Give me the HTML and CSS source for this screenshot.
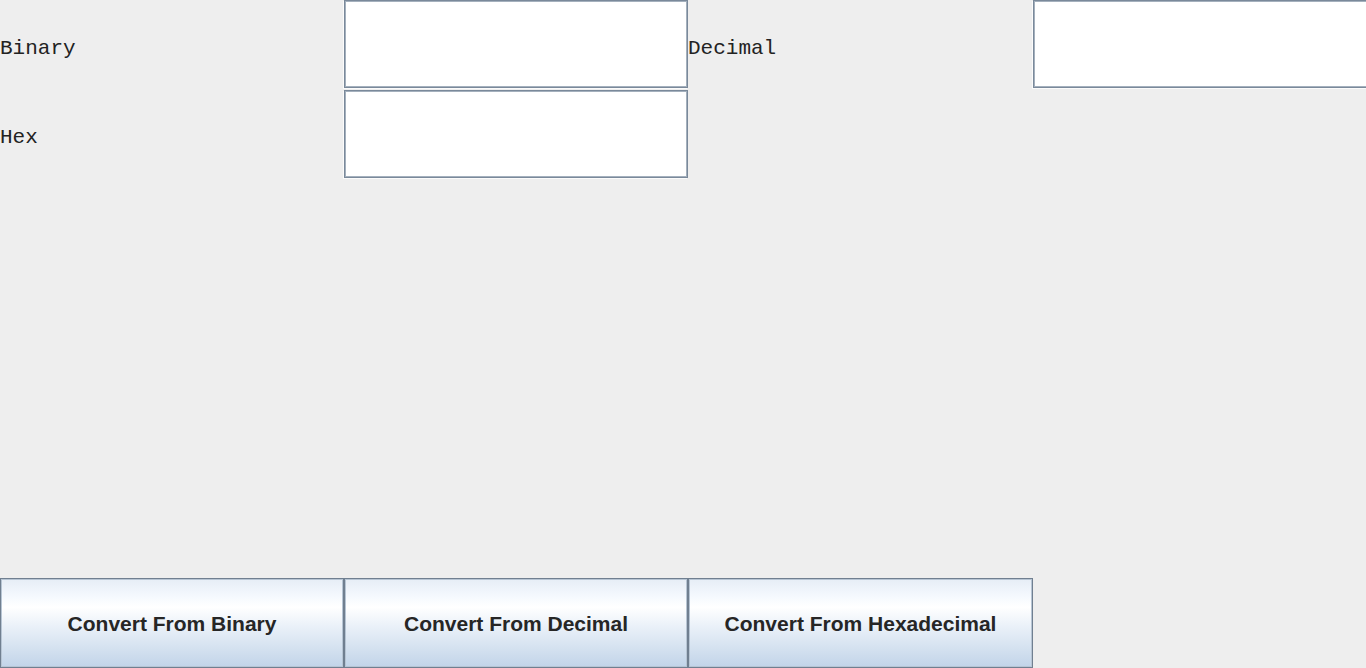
FILE: index.html
```html
<!DOCTYPE html>
<html>
<head>
<meta charset="utf-8">
<link rel="stylesheet" href="styles.css">
</head>
<body>
<div class="frame">
  <div class="fields">
    <label class="lbl">Binary</label>
    <div class="field"></div>
    <label class="lbl">Decimal</label>
    <div class="field"></div>
    <label class="lbl">Hex</label>
    <div class="field"></div>
    <div class="empty"></div>
    <div class="empty"></div>
  </div>
  <div class="spacer"></div>
  <div class="buttons">
    <button class="btn">Convert From Binary</button>
    <button class="btn">Convert From Decimal</button>
    <button class="btn">Convert From Hexadecimal</button>
    <div class="empty"></div>
  </div>
</div>
</body>
</html>
```
FILE: styles.css
```css
html, body {
  margin: 0;
  padding: 0;
  background: #eeeeee;
  overflow: hidden;
}
.frame {
  width: 1366px;
  height: 668px;
  display: flex;
  flex-direction: column;
  overflow: hidden;
}
.fields {
  display: grid;
  grid-template-columns: 344px 344px 345px 345px;
  grid-template-rows: 89px 89px;
  width: 1378px;
}
.lbl {
  display: flex;
  align-items: center;
  font-family: "Liberation Mono", "Courier New", monospace;
  font-size: 21px;
  color: #222;
  padding-top: 7px;
}
.field {
  box-sizing: border-box;
  background: #fff;
  border: 1px solid #7a899a;
  box-shadow: inset 0 0 0 1px #a4b0bd, -1px 1px 0 #fbfbfb;
  margin-bottom: 1px;
}
.fields .field:nth-child(6) {
  margin-top: 1px;
  margin-bottom: 0;
}
.spacer {
  flex: 1;
}
.buttons {
  display: grid;
  grid-template-columns: 344px 344px 345px 345px;
  height: 90px;
  width: 1378px;
}
.btn {
  box-sizing: border-box;
  margin: 0;
  height: 90px;
  border: 1px solid #707f90;
  box-shadow: inset 0 0 0 1px #b7c5d4;
  background: linear-gradient(to bottom, #e6edf6 0%, #f5f9fe 20%, #ffffff 32%, #e9f0f8 55%, #d5e2f0 78%, #c2d4e9 100%);
  font-family: "Liberation Sans", Arial, sans-serif;
  font-weight: bold;
  font-size: 21px;
  color: #262626;
  padding: 0;
  padding-top: 2px;
}
```
